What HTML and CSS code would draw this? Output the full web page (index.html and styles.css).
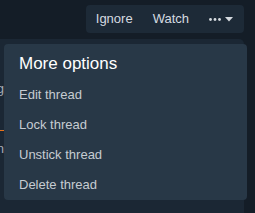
FILE: index.html
```html
<!DOCTYPE html>
<html>
<head>
<meta charset="utf-8">
<link rel="stylesheet" href="styles.css">
</head>
<body>
<div class="page">
  <div class="topbar">
    <div class="btngroup">
      <span class="btn">Ignore</span>
      <span class="btn">Watch</span>
      <span class="btn more">
        <svg class="dots" width="12" height="3" viewBox="0 0 12 3"><circle cx="1.5" cy="1.5" r="1.4"/><circle cx="6" cy="1.5" r="1.4"/><circle cx="10.5" cy="1.5" r="1.4"/></svg>
        <svg class="caret" width="8" height="5" viewBox="0 0 8 5"><polygon points="0,0 8,0 4,4.5"/></svg>
      </span>
    </div>
  </div>
  <div class="card">
    <div class="side">
      <div class="line first"><span>g</span></div>
      <div class="line sep"><span>n</span></div>
    </div>
    <div class="menu">
      <div class="menu-title">More options</div>
      <div class="menu-item">Edit thread</div>
      <div class="menu-item">Lock thread</div>
      <div class="menu-item">Unstick thread</div>
      <div class="menu-item">Delete thread</div>
    </div>
  </div>
</div>
</body>
</html>
```

FILE: styles.css
```css
html, body {
  margin: 0;
  padding: 0;
  background: #141d27;
  font-family: "Liberation Sans", Arial, sans-serif;
  overflow: hidden;
}
.page {
  width: 255px;
  height: 213px;
  display: flex;
  flex-direction: column;
}
.topbar {
  display: flex;
  justify-content: flex-end;
  padding: 5px 11px 0 0;
  height: 28px;
}
.btngroup {
  display: flex;
  background: #1d2a37;
  border-radius: 4px;
  height: 28px;
}
.btn {
  padding: 0 10px;
  line-height: 28px;
  font-size: 13px;
  color: #d6dbe0;
  display: flex;
  align-items: center;
}
.btn.more {
  padding: 0 11px 0 10px;
  gap: 4px;
}
.dots, .caret {
  fill: #d6dbe0;
  display: block;
}
.dots { margin-top: 1px; }
.card {
  margin-top: 6px;
  width: 244px;
  flex: 1;
  background: #1b2734;
  border-top-right-radius: 5px;
  position: relative;
}
.side {
  width: 4px;
  overflow: hidden;
  padding-top: 40px;
  font-size: 13px;
  color: #a3abb4;
}
.line {
  display: flex;
  justify-content: flex-end;
  white-space: nowrap;
  line-height: 20px;
}
.line.first {
  height: 20px;
  margin-bottom: 31px;
}
.line.sep {
  border-top: 1px solid #e8731c;
  padding-top: 8px;
}
.menu {
  position: absolute;
  left: 4px;
  top: 5px;
  width: 243px;
  height: 156px;
  box-sizing: border-box;
  background: #283847;
  border-radius: 4px;
  padding: 10px 0 0 15px;
}
.menu-title {
  font-size: 17px;
  line-height: 20px;
  color: #ffffff;
  margin-bottom: 6px;
}
.menu-item {
  font-size: 13px;
  line-height: 30px;
  height: 30px;
  color: #c6ccd2;
}
```
